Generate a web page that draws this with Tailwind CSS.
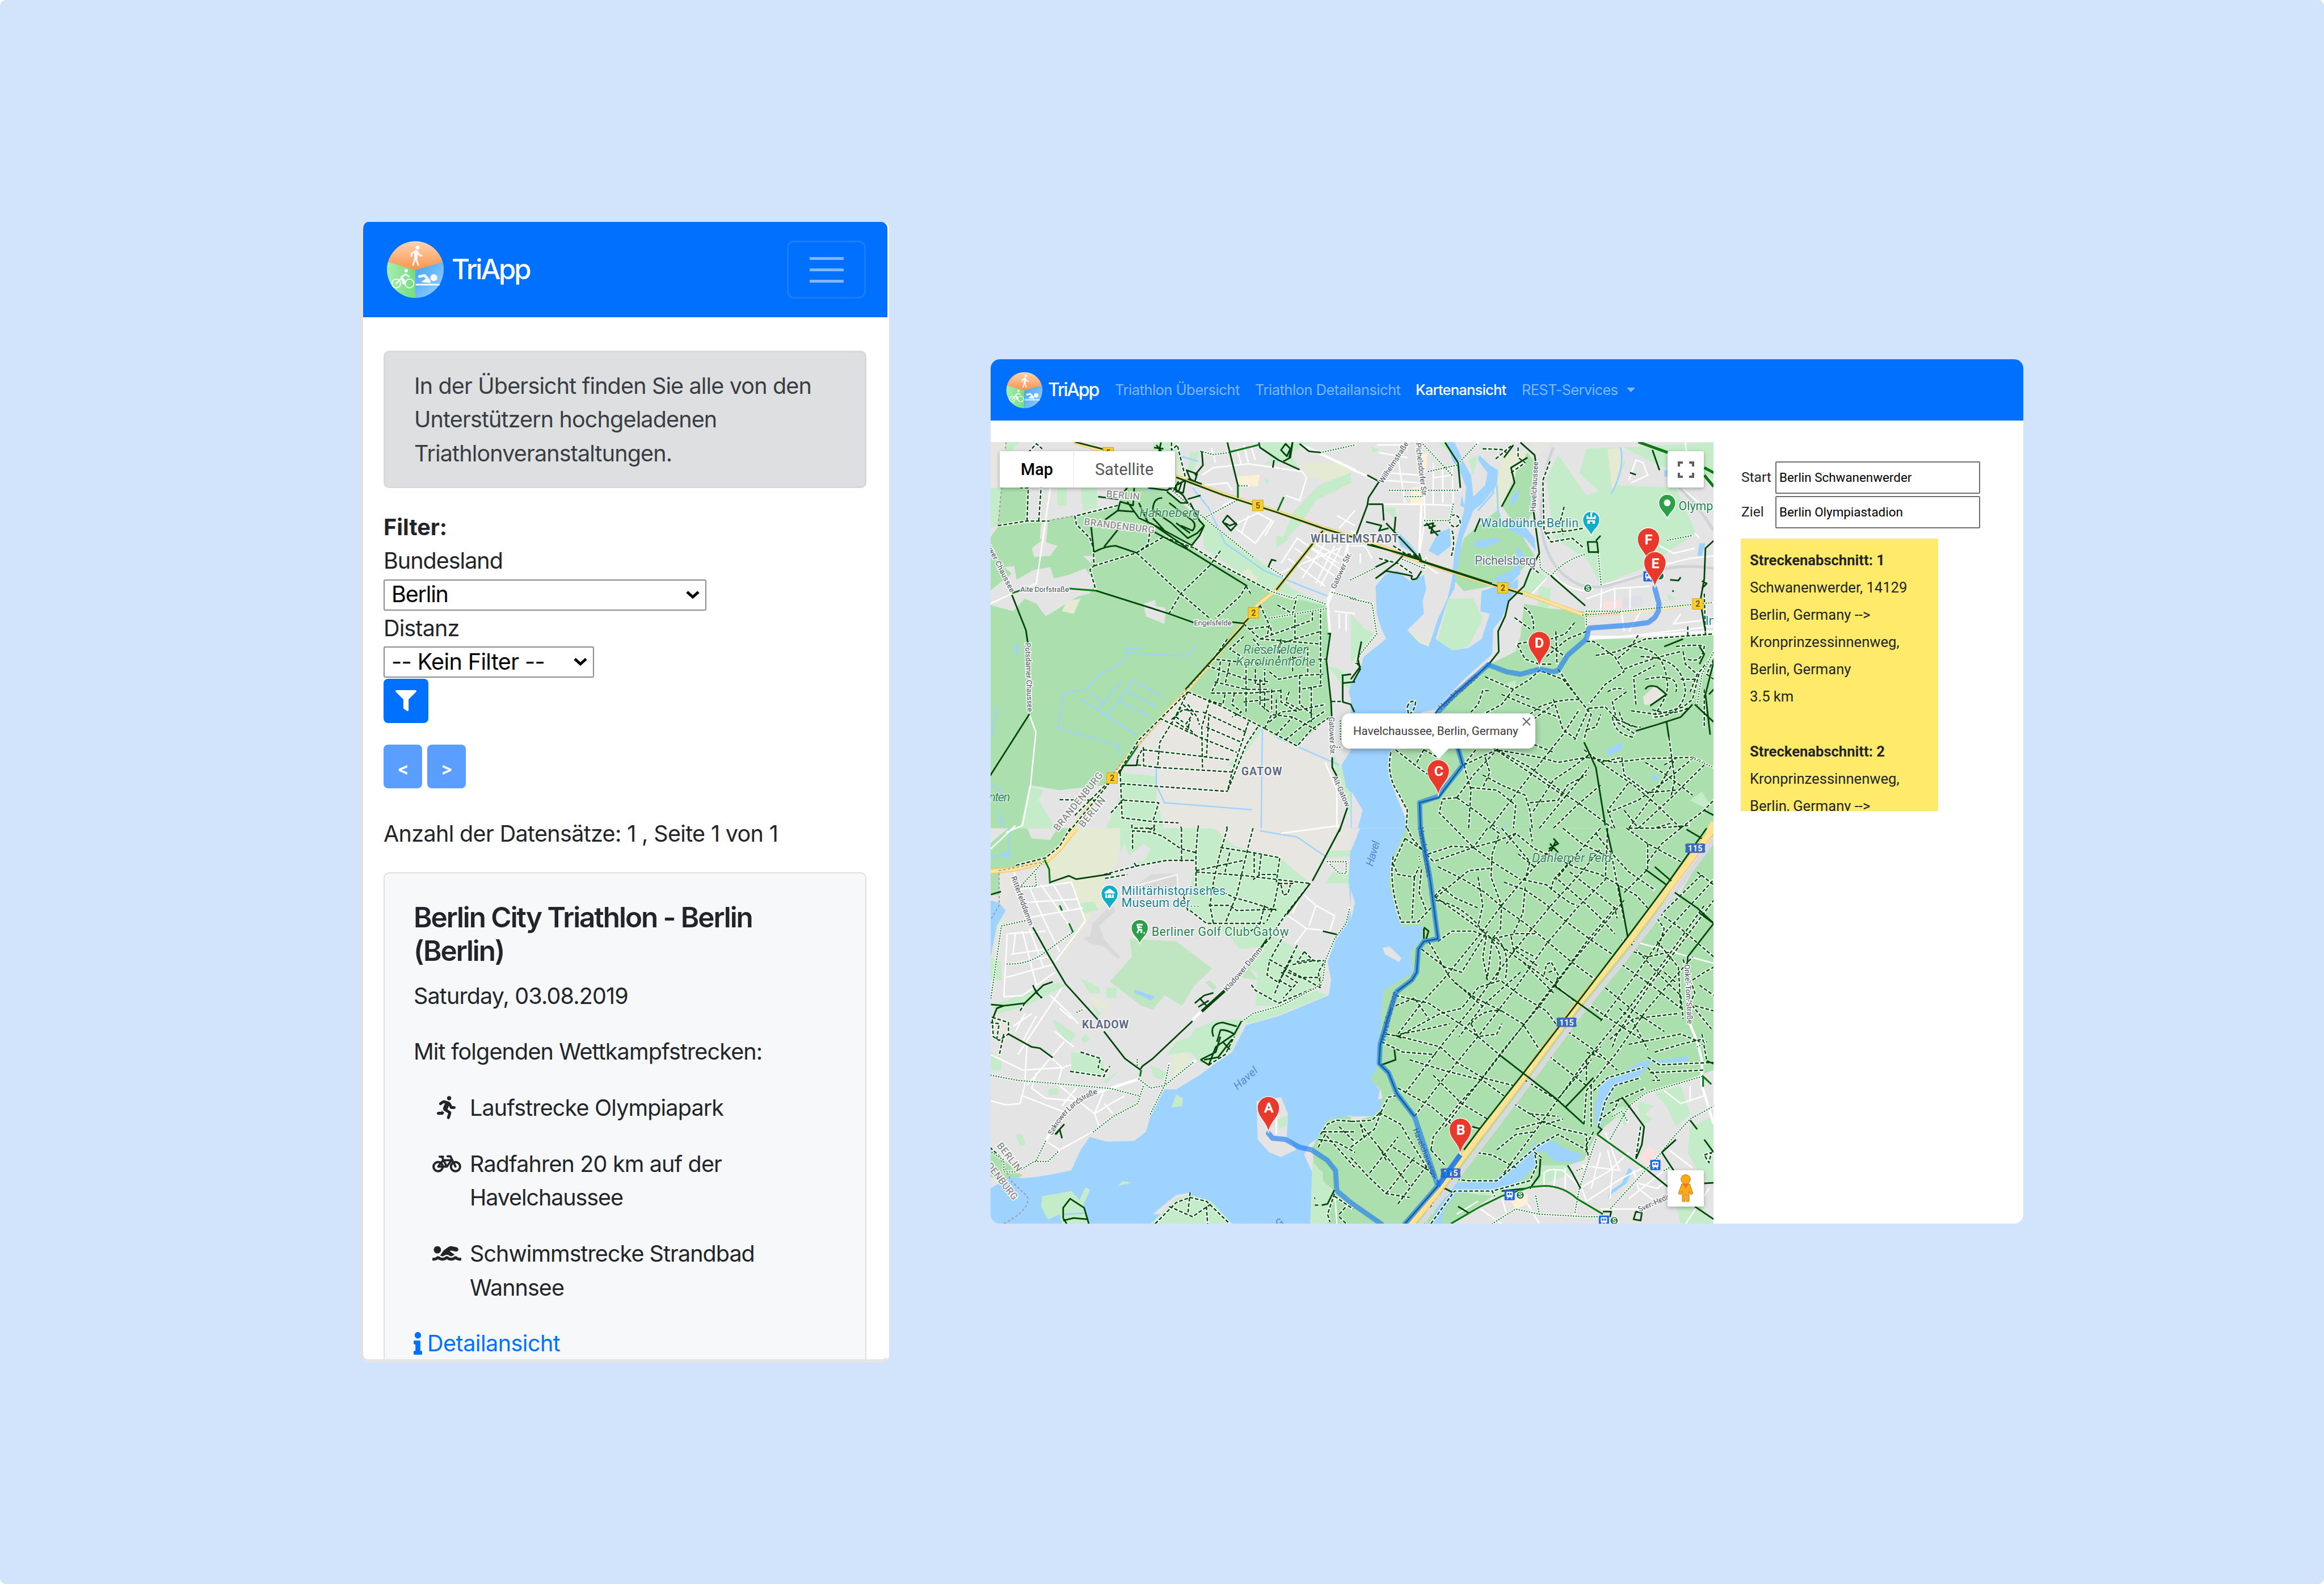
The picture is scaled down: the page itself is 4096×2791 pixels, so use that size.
<!DOCTYPE html>
<html lang="de">
<head>
<meta charset="utf-8">
<title>TriApp</title>
<script src="https://cdn.jsdelivr.net/npm/@tailwindcss/browser@4"></script>
</head>
<body class="bg-white">
<svg width="0" height="0" class="absolute">
  <defs>
    <linearGradient id="run" x1="0" y1="0" x2="0" y2="1"><stop offset="0" stop-color="#fdd6b4"/><stop offset="1" stop-color="#f9924a"/></linearGradient>
    <linearGradient id="bike" x1="0" y1="0" x2="1" y2="0"><stop offset="0" stop-color="#a8eeb0"/><stop offset="1" stop-color="#74dc84"/></linearGradient>
    <linearGradient id="swim" x1="0" y1="0" x2="1" y2="1"><stop offset="0" stop-color="#3ba2fb"/><stop offset="1" stop-color="#a0d4ff"/></linearGradient>
    <clipPath id="disc"><circle cx="50" cy="50" r="49"/></clipPath>
    <symbol id="logo" viewBox="0 0 100 100">
      <g clip-path="url(#disc)">
        <rect width="100" height="52" fill="url(#run)"/>
        <path d="M0 36L50 51V100H0Z" fill="url(#bike)"/>
        <path d="M100 36L50 51V100H100Z" fill="url(#swim)"/>
      </g>
      <g fill="none" stroke="#fff" stroke-opacity=".9" stroke-linecap="round" stroke-linejoin="round">
        <circle cx="54" cy="12" r="3.4" fill="#fff" stroke="none"/>
        <path d="M51 19V31L55 42M50 30L46 42M49 19L44 22 43 27M54 20L57 25 61 26" stroke-width="3"/>
        <path d="M51 19V30" stroke-width="6"/>
        <circle cx="17" cy="74" r="7.5" stroke-width="2"/><circle cx="40" cy="74" r="7.5" stroke-width="2"/>
        <circle cx="34" cy="52" r="3" fill="#fff" stroke="none"/>
        <path d="M17 74L27 64 29 74M33 58L26 63 31 69 31 75M33 58L39 62" stroke-width="2.8"/>
        <circle cx="82" cy="64" r="6" fill="#fff" stroke="none"/>
        <path d="M57 62L66 60 74 69" stroke-width="4.5"/><path d="M62 71L68 67 76 72Z" fill="#fff" stroke-width="2"/>
        <path d="M52 76H91" stroke-width="3"/>
      </g>
    </symbol>
    <g id="pin"><path d="M0 0C-2-26-26-36-26-60A26 26 0 0 1 26-60C26-36 2-26 0 0Z" fill="#e8392d" stroke="#fff" stroke-width="1.5"/></g>
    <g id="poi"><path d="M0 38C-3 24-20 18-20 0A20 20 0 0 1 20 0C20 18 3 24 0 38Z" stroke="#fff" stroke-width="2"/></g>
    <g id="b2"><rect x="-12.5" y="-12.5" width="25" height="25" fill="#fbcd2f" stroke="#d9a514" stroke-width="1.5"/></g>
    <g id="a115"><path d="M-24-9Q-20-12-14-11H14Q20-12 24-9Q21 0 24 9Q20 12 14 11H-14Q-20 12-24 9Q-21 0-24-9Z" fill="#3b68c0"/></g>
    <g id="train"><rect x="-12" y="-12" width="24" height="24" rx="2" fill="#1a66e8"/><rect x="-7.5" y="-8" width="15" height="13" rx="2" fill="#fff"/><path d="M-5-5H-1V0H-5ZM1-5H5V0H1Z" fill="#1a66e8"/><path d="M-6 9L-3 5M6 9L3 5" stroke="#fff" stroke-width="2"/></g>
  </defs>
</svg>

<main class="flex h-[2791px] w-[4096px] items-start gap-[179px] overflow-hidden rounded-[10px] bg-[#d2e4fc] pt-[389px] pl-[635px]">

  <!-- mobile overview -->
  <section class="h-[2012px] w-[932px] shrink-0 overflow-hidden rounded-[14px] border-t-2 border-r-[3px] border-b-[6px] border-l-[5px] border-t-[#dcdfe4] border-r-white border-b-[#e3e4e6] border-l-[#e2e1e2] bg-white font-[Inter,sans-serif] text-[39.5px] leading-[59.3px] tracking-[-0.85px] text-[#212529]">
    <header class="flex h-[168px] items-center justify-between bg-[#0070ff] pr-[38px] pl-[41px]">
      <div class="flex items-center gap-[13px]">
        <svg class="size-[102px]"><use href="#logo"/></svg>
        <span class="text-[49.4px] font-medium tracking-[-3.4px] text-white">TriApp</span>
      </div>
      <div class="flex h-[102px] w-[139px] flex-col items-center justify-center gap-[15px] rounded-[12px] border-[3px] border-white/10">
        <i class="h-[5px] w-[60px] bg-white/50"></i><i class="h-[5px] w-[60px] bg-white/50"></i><i class="h-[5px] w-[60px] bg-white/50"></i>
      </div>
    </header>
    <div class="pt-[59px] pr-[37px] pl-[36px]">
      <div class="h-[242px] rounded-[10px] border-[3px] border-[#d6d8db] bg-[#dedfe1] pt-[30px] pl-[51px] text-[#383d41]">
        <p>In der Übersicht finden Sie alle von den<br>Unterstützern hochgeladenen<br>Triathlonveranstaltungen.</p>
      </div>
      <p class="mt-[40px] font-bold tracking-normal">Filter:</p>
      <p class="tracking-[-1px]">Bundesland</p>
      <div class="flex h-[59px] items-center">
        <div class="flex h-[55px] w-[569px] items-center justify-between rounded-[3px] border-[2.5px] border-[#8b8b8b] pr-[10px] pl-[12px] tracking-[-1.2px] text-black">
          <span>Berlin</span>
          <svg class="h-[16px] w-[24px]" viewBox="0 0 24 16" fill="none" stroke="#000" stroke-width="5"><path d="M2 3L12 12 22 3"/></svg>
        </div>
      </div>
      <p>Distanz</p>
      <div class="flex h-[59px] items-center">
        <div class="flex h-[55px] w-[371px] items-center justify-between rounded-[3px] border-[2.5px] border-[#8b8b8b] pr-[10px] pl-[12px] tracking-[-0.6px] text-black">
          <span>-- Kein Filter --</span>
          <svg class="h-[16px] w-[24px]" viewBox="0 0 24 16" fill="none" stroke="#000" stroke-width="5"><path d="M2 3L12 12 22 3"/></svg>
        </div>
      </div>
      <div class="flex h-[78px] w-[79px] items-start justify-center rounded-[8px] bg-[#0070ff] pt-[20px]">
        <svg class="size-[37px]" viewBox="0 0 512 512" fill="#fff"><path d="M487.976 0H24.028C2.71 0-8.047 25.866 7.058 40.971L192 225.941V432c0 7.831 3.821 15.17 10.237 19.662l80 55.98C298.02 518.69 320 507.493 320 487.98V225.941l184.947-184.97C520.021 25.896 509.338 0 487.976 0z"/></svg>
      </div>
      <div class="mt-[38px] flex gap-[9px] text-[30px] leading-[84px] font-bold text-white">
        <div class="h-[77px] w-[68px] rounded-[8px] bg-[#5a9fff] text-center">&lt;</div>
        <div class="h-[77px] w-[68px] rounded-[8px] bg-[#5a9fff] text-center">&gt;</div>
      </div>
      <p class="mt-[51px] tracking-[-0.65px]">Anzahl der Datensätze: 1 , Seite 1 von 1</p>
      <div class="mt-[38px] h-[900px] rounded-[10px] border-[2.5px] border-[#dfe0e1] bg-[#f7f8fa] pt-[48px] pl-[51px]">
        <h2 class="text-[49.4px] font-semibold tracking-[-2.05px]">Berlin City Triathlon - Berlin<br>(Berlin)</h2>
        <p class="mt-[20px]">Saturday, 03.08.2019</p>
        <p class="mt-[39px]">Mit folgenden Wettkampfstrecken:</p>
        <ul class="mt-[40px] flex flex-col gap-[39.5px]">
          <li class="flex"><span class="flex w-[99px] justify-end pr-[25px]"><svg class="mt-[8px] h-[41px] w-[33px]" viewBox="0 0 416 512" fill="#212529"><path d="M272 96c26.51 0 48-21.49 48-48S298.51 0 272 0s-48 21.49-48 48 21.49 48 48 48zM113.69 317.47l-14.8 34.52H32c-17.67 0-32 14.33-32 32s14.33 32 32 32h77.45c19.25 0 36.58-11.44 44.11-29.09l8.79-20.52-10.67-6.3c-17.32-10.23-30.06-25.37-37.99-42.61zM384 223.99h-44.03l-26.06-53.25c-12.5-25.55-35.45-44.23-61.78-50.94l-71.08-21.14c-28.3-6.8-57.77-.55-80.84 17.14l-39.67 30.41c-14.03 10.75-16.69 30.83-5.94 44.86s30.84 16.69 44.86 5.94l39.69-30.41c7.67-5.89 17.44-8 25.27-6.14l14.7 4.37-37.46 87.39c-12.62 29.48-1.31 64.01 26.3 80.31l84.98 50.17-27.47 87.73c-5.28 16.86 4.11 34.82 20.97 40.09 3.19 1 6.41 1.48 9.58 1.48 13.61 0 26.23-8.77 30.52-22.45l31.64-101.06c5.91-20.77-2.89-43.08-21.64-54.39l-61.24-36.14 31.31-78.28 20.27 41.43c8 16.34 24.92 26.89 43.11 26.89H384c17.67 0 32-14.33 32-32s-14.33-31.99-32-31.99z"/></svg></span><span>Laufstrecke Olympiapark</span></li>
          <li class="flex"><span class="flex w-[99px] justify-end pr-[15px]"><svg class="mt-[8px] h-[41px] w-[51px]" viewBox="0 0 640 512" fill="none" stroke="#212529" stroke-linecap="round" stroke-linejoin="round"><circle cx="128" cy="320" r="102" stroke-width="50"/><circle cx="512" cy="320" r="102" stroke-width="50"/><path d="M128 320L236 180H425L320 320H128M320 320L210 105M160 100H240M512 320L400 92H335" stroke-width="46"/></svg></span><span>Radfahren 20 km auf der<br><span class="tracking-[-1.1px]">Havelchaussee</span></span></li>
          <li class="flex"><span class="flex w-[99px] justify-end pr-[15px]"><svg class="mt-[8px] h-[41px] w-[51px]" viewBox="0 0 640 512" fill="#212529"><path d="M189.61 310.58c3.54 3.26 15.27 9.42 34.39 9.42s30.86-6.16 34.39-9.42c16.02-14.77 34.5-22.58 53.46-22.58h16.3c18.96 0 37.45 7.81 53.46 22.58 3.54 3.26 15.27 9.42 34.39 9.42s30.86-6.16 34.39-9.42c14.86-13.71 31.88-21.12 49.39-22.16l-112.84-80.6 18-12.86c3.64-2.58 8.28-3.52 12.62-2.61l100.35 21.53c25.91 5.53 51.44-10.97 57-36.88 5.55-25.92-10.95-51.44-36.88-57L437.68 98.47c-30.73-6.58-63.02.12-88.56 18.38l-80.02 57.17c-10.38 7.39-19.36 16.44-26.72 26.94L173.75 299c5.47 3.23 10.82 6.93 15.86 11.58zM624 352h-16c-26.04 0-45.8-8.42-56.09-17.9-8.9-8.21-19.66-14.1-31.77-14.1h-16.3c-12.11 0-22.87 5.89-31.77 14.1C461.8 343.58 442.04 352 416 352s-45.8-8.42-56.09-17.9c-8.9-8.21-19.66-14.1-31.77-14.1h-16.3c-12.11 0-22.87 5.89-31.77 14.1C269.8 343.58 250.04 352 224 352s-45.8-8.42-56.09-17.9c-8.9-8.21-19.66-14.1-31.77-14.1h-16.3c-12.11 0-22.87 5.89-31.77 14.1C77.8 343.58 58.04 352 32 352H16c-8.84 0-16 7.16-16 16v32c0 8.84 7.16 16 16 16h16c38.62 0 72.72-12.19 96-31.84 23.28 19.66 57.38 31.84 96 31.84s72.72-12.19 96-31.84c23.28 19.66 57.38 31.84 96 31.84s72.72-12.19 96-31.84c23.28 19.66 57.38 31.84 96 31.84h16c8.84 0 16-7.16 16-16v-32c0-8.84-7.16-16-16-16zm-512-96c44.18 0 80-35.82 80-80s-35.82-80-80-80-80 35.82-80 80 35.82 80 80 80z"/></svg></span><span class="tracking-[-0.95px]">Schwimmstrecke Strandbad<br>Wannsee</span></li>
        </ul>
        <p class="mt-[39px] flex items-start tracking-[-0.5px] text-[#0070ff]"><svg class="mt-[9px] mr-[9px] h-[40px] w-[15px]" viewBox="0 0 192 512" fill="#0070ff"><path d="M20 424.229h20V279.771H20c-11.046 0-20-8.954-20-20V212c0-11.046 8.954-20 20-20h112c11.046 0 20 8.954 20 20v212.229h20c11.046 0 20 8.954 20 20V492c0 11.046-8.954 20-20 20H20c-11.046 0-20-8.954-20-20v-47.771c0-11.046 8.954-20 20-20zM96 0C56.235 0 24 32.235 24 72s32.235 72 72 72 72-32.235 72-72S135.764 0 96 0z"/></svg>Detailansicht</p>
      </div>
    </div>
  </section>

  <!-- desktop map view -->
  <section class="mt-[244px] flex h-[1523px] w-[1820px] shrink-0 flex-col overflow-hidden rounded-[16px] bg-white">
    <header class="flex h-[108px] shrink-0 items-center bg-[#0070ff] pl-[27px] font-[Inter,sans-serif] text-[25.6px] tracking-[-0.55px] text-[#80b7ff]">
      <svg class="size-[65px]"><use href="#logo"/></svg>
      <span class="ml-[9px] w-[88px] text-[32px] font-medium tracking-[-2.2px] whitespace-nowrap text-white">TriApp</span>
      <span class="ml-[30px] w-[219px] whitespace-nowrap">Triathlon Übersicht</span>
      <span class="ml-[28px] w-[257px] whitespace-nowrap">Triathlon Detailansicht</span>
      <span class="ml-[26px] w-[161px] font-medium tracking-[-0.85px] whitespace-nowrap text-white">Kartenansicht</span>
      <span class="ml-[26px] w-[170px] tracking-[-0.8px] whitespace-nowrap">REST-Services</span>
      <svg class="ml-[15px] h-[8px] w-[15px]" viewBox="0 0 15 8" fill="#80b7ff"><path d="M0 0H15L7.500 8Z"/></svg>
    </header>
    <div class="mt-[38px] flex flex-1 font-[Roboto,sans-serif]">
      <div class="relative h-[1377px] w-[1274px] shrink-0 overflow-hidden bg-[#e4e4e4]">
        <svg class="size-full font-[Roboto,sans-serif] [&_path]:[vector-effect:non-scaling-stroke]" viewBox="2332 1041 1702 1840" preserveAspectRatio="none" fill="none">
          <defs>
            <clipPath id="qa"><rect x="0" y="0" width="1551" height="1552"/></clipPath>
            <clipPath id="qb"><rect x="0" y="0" width="1600" height="1552"/></clipPath>
            <clipPath id="qc"><rect x="0" y="0" width="1551" height="1600"/></clipPath>
            <clipPath id="qd"><rect x="0" y="0" width="1600" height="1600"/></clipPath>
            <!-- footpaths and cycleways, drawn twice: casing first, dashes on top -->
            <g id="trails" stroke-linejoin="round">
              <g transform="translate(2330 1030) scale(.54847 .59311)"><path d="M35 350L160 332 255 332M160 332L165 200 130 200M210 332L220 200M165 60L200 25 225 45 M780 20V50L805 30 840 160M550 270L365 312 372 345 430 400 445 440 447 510 430 525 455 605M447 510L630 458 745 395 880 440M630 458L680 425 690 350M630 458L820 620 940 715M945 508L820 620 770 698M990 450L945 508M880 440L1000 510 1210 612M1100 590L1075 630 970 718M1100 590L1120 620M1210 612L1300 640M1160 665L1200 745 1190 790M1235 665L1300 700 1320 625M1090 740L1160 800 1385 725 1385 690M1115 760L1205 750 1210 780M1310 700V800L1210 830M1420 680V980M1310 800L1420 770M1160 800L1420 820M1090 790L1030 840 1080 870M1020 800L960 880 1060 890 1200 900M930 905L1100 960 1200 970M990 890L980 960 950 1015M1030 895L1010 980M1100 900V1090M1140 920V980H1180V920M1200 930L1240 960 1330 945 1430 940M1330 945V1000L1430 985M1365 830V940M1210 1000V1090M1250 1000V1050L1320 1090M1285 1010L1270 1050 1330 1080M1330 1000V1060L1385 1100M1380 990V1130M950 1015L1120 1015 1250 1005M965 970L1100 1000 1200 1000M1010 1020L1000 1060 940 1045M1050 1015L1040 1060 1080 1090 1040 1110M850 1010L1000 1070 1180 1155M1180 1155L1320 1225 1380 1160 1460 1110M1200 1130L1250 1090 1340 1080 1440 1060M1180 1155L1210 1100 1300 1110 1400 1160M1230 1180L1300 1110M1270 1200L1350 1140 1440 1085M850 1010L790 1120 730 1210 720 1310M730 1115L900 1190 1060 1250M945 1040L910 1150 913 1310M930 1150L1080 1210M915 1090L1100 1170M940 1110L930 1270M1110 1130L1040 1330M720 1310L1040 1328 1020 1405M1150 1150L1100 1220 1020 1405M720 1310L632 1300 635 1270 660 1230M660 1240L900 1265 1030 1280M660 1230V1300M565 1375L1020 1405M560 1330L568 1510 700 1525 810 1530M575 1440L725 1450 700 1525M520 1490L575 1435M300 1438L450 1440M340 1565L560 1320 640 1200 850 1010M365 1500L530 1350M830 1060L870 1100 840 1140 880 1180M780 1120L830 1080 900 1090M800 1130L850 1160 860 1120M820 1070L800 1110 830 1130M850 1060L890 1110 900 1140M1468 1048H1520M610 1551V1530M705 1551V1530M822 1551L820 1545M895 1540V1551M1020 1545L1015 1551M620 1551L700 1551M1300 870V930M1130 800L1190 860M1250 800L1240 880M1410 880H1450M1340 870L1280 880M1160 960V1060L1200 1090M1180 1010V1080M1090 1050L1200 1040M1230 1040V1110"/></g>
              <g transform="translate(3180 1030) scale(.55485 .59311)"><path d="M560 45L640 48 660 60M615 85L685 30M710 40V80L740 100M680 140L740 100M845 95L815 170 820 370 850 415 940 400 990 440M905 275L890 330 900 385M830 380L930 370 990 360M425 310Q460 300 465 340 440 370 420 340ZM430 370Q445 420 425 475M120 480L200 500 260 540M180 430L230 460 290 470M240 1070Q250 1040 275 1050 270 1090 245 1100ZM735 675Q780 700 775 760M695 715L760 760M870 770L875 900M950 735L910 780 850 800M800 900L740 880 705 820 760 810M850 830L910 870M850 900L800 900M1000 770L920 800 830 870M570 950L690 1000 760 960 800 925 900 960 970 1040 1020 1100 1000 1160 990 1200M880 920L930 990 970 1040M585 1005L560 1005 540 1060 510 1090M690 1000L640 1060 560 1100M640 1020L740 1060 880 1110M700 1020L760 1040M970 1040Q870 1040 800 1070L650 1180M860 1040L900 1160 960 1200M1010 1075L1080 1070 1130 1120 1210 1150M1010 1075L950 1200M1000 1160L1040 1150 1060 1100M1110 1110Q1120 1180 1200 1190M1140 1090Q1150 1150 1230 1150M1040 865L1130 850 1250 800 1400 790 1540 780M1000 810H1030L1120 870 1160 930 1080 980 1010 1060M1220 785L1180 840 1130 880M1200 830Q1330 840 1340 960 1360 1010 1290 1100M1160 920Q1260 880 1400 850M1210 1060L1200 950 1290 905M1230 870Q1410 870 1420 1010 1400 1110 1280 1110M1190 1085L1300 1100 1410 1070 1450 1040 1480 930 1540 860M1380 830Q1470 820 1500 830 1490 900 1430 880M1250 960Q1400 930 1380 1010M1410 850L1420 900 1470 940 1440 1010M1400 960H1470M1280 1080Q1360 1110 1440 1070M1170 1010L1110 1050 1130 1130 1210 1180M1090 1010Q1120 990 1160 1000M1500 1000V1150M1540 880L1510 940 1540 960M480 1300L510 1400 500 1551M190 1240L300 1320 330 1340M310 1240L370 1270M280 1290L310 1240M450 1430L390 1435 375 1490 440 1551M450 1430L520 1340 620 1240 760 1130 860 1060M450 1430L540 1490 620 1551M480 1300L620 1240 800 1270 880 1290 1000 1270M570 1270L590 1330 560 1390M530 1240L480 1300M620 1240L760 1310 900 1410 1010 1480 1110 1551M700 1170L780 1220 860 1250M600 1230L900 1420M560 1340L640 1380 740 1420 760 1480 770 1551M510 1390L620 1400 700 1460 690 1551M590 1551L680 1440 780 1320 900 1180 970 1080M800 1551L960 1370 1010 1310M760 1450L880 1440 920 1380 1000 1340M860 1551L960 1460 1060 1380M990 1240L1060 1290 1200 1380 1300 1460 1400 1551M1000 1270L1120 1290 1250 1275 1450 1270M1060 1290L1150 1270M1150 1270L1160 1340 1260 1410 1380 1400M1010 1260L940 1310 860 1360 770 1490M1090 1490L1220 1440 1340 1360 1450 1275M1350 1190L1375 1360 1360 1420M1250 1290L1340 1340 1450 1420M1180 1551L1300 1400 1380 1270M1120 1551L1090 1480 1180 1370M1220 1551L1360 1430 1500 1300M1300 1551L1440 1540M1160 1480L1220 1551M1400 1551L1500 1480 1540 1440M1330 1300L1370 1280M1450 1270L1500 1290M170 1250Q150 1340 200 1410L240 1480 235 1551M0 640L80 655M1430 750V790M1500 620L1505 780M750 500L800 540"/></g>
              <g transform="translate(2330 1950) scale(.54847 .60587)"><path d="M345 0L300 70 240 115 110 145M613 80V10L690 15 740 30 820 80 885 95M680 0L705 10 710 -10M823 0V130M893 0L885 95 885 225M490 180L640 145 760 125 885 125M495 195L590 180M620 135L630 150M1020 0L985 110 960 210 945 300 960 370M1130 0L1110 70 1060 260 1010 370M885 165L1090 125M885 170L1100 185 1375 215M990 75L1130 95 1245 115 1230 210M1135 95V180M1165 105L1155 180 M1230 180L1160 180 1130 200M1030 95L1010 170M1240 210L1220 300 1190 360M960 230L1050 270 1130 290 1230 320M940 300L1030 300 1060 320 1230 315M860 320L930 370H1180M1180 300L1160 370 1120 400M940 240L830 260 850 320M1240 215H1310M1250 220L1260 260 1280 255 1290 220M1375 215L1270 335 1200 430 1160 470M1210 500L1260 420M1200 510L1300 560 1420 620M1200 520L1190 570 1240 600 1300 500M1320 455L1260 560 1220 650M1350 480L1320 520 1380 510 1410 520M1350 480L1390 515 1440 515 1410 560 1420 610 1240 680 1140 630 1120 605M1300 530L1390 515M1250 560L1320 600 1260 660M1280 560L1330 580 1420 580M1240 590L1300 620M10 735L80 755 80 800 40 825 15 810ZM60 800L40 885M130 710L150 680M190 620L220 660M390 870L475 895 465 930 500 945 515 925M345 945L490 965 500 940M1420 1190L1450 1150 1490 1135 1568 1140M1410 1240L1440 1190 1500 1250 1568 1320M1410 1210L1490 1220 1568 1260M1430 1180L1568 1180M1500 1160L1568 1220M1480 1420L1450 1500 1460 1530M1480 1430L1560 1480M1500 1500L1530 1470M1395 1435V1440M1395 1465H1410M1500 1510L1530 1537M710 1537L800 1455 860 1435 930 1450 1030 1537M860 1415L850 1500M770 1470L870 1510 950 1460M930 1470L935 1537M0 1240L60 1290M940 920L1010 880 1050 810M0 755L40 760 30 820"/></g>
              <g transform="translate(3180 1950) scale(.55485 .60587)"><path d="M230 40L330 100L430 70 520 75 620 50 700 20 780 80 950 150 1060 180 1210 260 1260 310M440 0L520 75 600 130 720 200M370 150L480 200 570 250 640 305 740 370 820 430 930 515 1040 590M355 265L470 340 560 400 600 430 700 500 840 590 960 680M360 270L500 165 600 155M580 0L520 75 350 130M650 210L740 240 820 290 910 360 1020 435 1110 490M730 200L830 220 870 250 930 290 960 300M880 200L980 280 1050 340 1120 410M930 170L1040 250 1120 310 1130 350M760 0L770 50M700 20L660 60M600 0L630 20 600 100 595 190 640 300 635 390 600 430 580 580M330 440L420 580 530 670 570 700M300 470L400 540 470 560 580 400M440 600L530 660 640 710 730 760 800 860M640 595L720 650 830 710 870 760M190 650L330 680 480 770 540 810 630 880M150 800L210 810 380 850 450 910 560 970 690 1000M130 830L220 870 360 880M250 900L390 940 560 980 650 1040M200 1010L340 1080 440 1160 550 1165M350 960L470 1070 580 1130M0 1280L70 1350 150 1420 250 1435M40 1150L120 1240 250 1390M0 1140L90 1135 130 1100 160 1045 190 1040M120 1105L210 1150 330 1330M40 1150L60 1210M180 1240L330 1330 400 1405M0 1240L100 1170 130 1100M200 800L300 680 400 580 560 400 640 300 760 170 870 60M200 810L380 720 470 700 540 620 640 590M210 800Q330 780 420 760M190 690L270 660 330 740M230 1030L380 850 520 690 640 540 760 400 850 300 980 170 1060 80M270 1120L370 1000 540 810 700 620 830 450 960 310 1080 200 1090 0M340 1250L350 1200 460 1070 560 970 720 780 870 600 1010 430 1130 300M400 1160L640 870 810 680 940 520 1060 390 1160 280M340 1250L400 1310M80 1340L200 1200M150 1420L270 1280M200 1460L340 1290M370 440L430 400 520 400 600 430 700 410 790 410M680 420L690 470 800 540M575 420L560 500 580 590M600 440Q660 500 615 590M620 430Q680 480 655 590M690 480L700 460 780 500M510 760Q560 700 640 710M510 760L540 810 620 800 640 760M820 570L830 530 850 520 880 570 870 610M840 560L870 550M540 190L560 300 540 380M360 280Q480 300 560 400M355 265L390 230 440 270 540 310M740 230L730 330 690 410M180 110Q160 220 215 365L285 365 340 310M230 40L180 140 200 180 270 190 290 150M270 190L260 350M300 160L290 250 320 320M240 0L260 40 350 130M640 0L760 130 740 200M710 100L780 150M850 240L860 200 940 120M900 0L980 60 1110 120 1160 360M1040 20L1090 80 1180 170 1290 240M1170 0L1260 60 1400 130M1260 60L1260 160 1160 250M1060 0L1040 20 960 100 870 200M1180 0L1290 0 1360 -20M1400 0L1320 60 1260 130M530 1260L700 1060 820 910M400 1430L530 1260 600 1270 700 1320M650 1340L820 1130 1000 900 1180 700 1360 480 1500 300M760 1110L880 1120M690 1070L830 1150 900 1130M740 980L900 1070M840 885L1000 1000M920 790L1060 880 1130 940M1000 680L1130 760 1250 830M1080 620L1200 710 1330 790M1150 530L1290 620 1400 700M1190 450L1300 560 1400 650 1410 740M1310 330L1400 390 1540 500M1470 170L1540 220M1000 690L1150 530 1300 350 1490 180M1060 750L1200 580 1340 400 1540 200M1110 850L1130 800 1260 620 1400 450 1540 280M1180 840L1400 800 1480 830M1290 870L1400 840 1490 820M1260 890L1310 920 1540 910M1260 930L1310 980 1280 980M1270 950L1500 940M1030 1020L1090 970 1240 930M1000 980L1000 900 1060 850M1020 1000L1020 1160M990 1150L1000 1020 1130 870 1260 700 1450 500M1050 1160L1080 1060 1120 1000 1230 970M1100 1070L1250 1010M1030 1180L1000 1230 1010 1290M700 1170L820 1140 900 1170 1000 1190M620 1250L700 1190 780 1180M400 1360L500 1370 620 1370 760 1260 800 1230 880 1190 1000 1250M810 1280L780 1260 790 1310 760 1370 600 1410M340 1537L440 1410 600 1410 610 1430M310 1537L360 1430M1410 510L1460 640 1440 680 1530 780M1450 590L1500 560 1540 540M1480 610L1540 650M1460 690L1540 710M1300 350L1330 390 1300 480M1200 480L1260 500 1360 480M1300 440L1390 540 1400 700M1330 560L1380 600M1100 820L1200 740 1300 730 1390 720M1140 700L1190 740 1260 860M1000 1260L1000 1190M1060 890L1000 870M1490 800L1510 900M1140 1050L1120 1090 1060 1130M1230 1160L1210 1280M860 640L730 520M720 560L560 690 460 810M880 1050L1020 900M380 1430L340 1500M1500 1270L1530 1260 1520 1300ZM120 1240L150 1290"/></g>
            </g>
            <g id="dots" stroke-linecap="round">
              <g transform="translate(2330 1030) scale(.54847 .59311)"><path d="M905 55L960 68 1030 60M1420 60L1568 30M1060 250L920 320 1130 475M770 200L920 320M1070 192H1110M1200 515L1265 555M1210 612L1310 640 1325 625 1445 662M1200 718L1445 680M1470 615L1568 640M1505 1125V1200M1480 1230H1510"/></g>
              <g transform="translate(3180 1030) scale(.55485 .59311)"><path d="M300 20L360 80 430 150M330 135L450 110 540 20M165 210H460M230 235H300M435 265L420 330 310 330M1050 460L1062 585M990 465Q900 490 850 550M800 465L805 520 850 550M1345 408L1445 390M1000 690L1160 690 1320 675 1540 655M1000 690V750M985 705L1150 695M0 640L90 660 110 780 40 860 20 900M0 565L100 520M210 480L310 520 320 480M1470 1060L1490 940 1540 850M1450 1275L1540 1310"/></g>
              <g transform="translate(2330 1950) scale(.54847 .60587)"><path d="M5 660L50 380 150 360M75 528Q170 530 240 480L355 405M130 228L230 130M195 180L200 225 130 228M375 715L400 705M5 960L120 980 380 1000 520 1012 640 1040M445 1180L530 1120 635 1070 660 1000M640 975L690 1010 750 1000 880 905M690 1110L750 1000 770 915M633 900V930M200 1290L240 1215M10 1260L60 1290 60 1335 120 1335 190 1295 250 1295 295 1255M1085 750L1130 720 1250 690 1400 620 1430 590 1440 515M1440 515L1480 430 1530 370 1545 310M1450 130H1530V175H1500L1455 135"/></g>
              <g transform="translate(3180 1950) scale(.55485 .60587)"><path d="M1150 435H1200L1210 470M1490 965L1360 1000 1250 1030 1180 1080 1100 1210M1540 1080L1440 1130 1370 1200 1300 1280 1100 1480M1040 1210L970 1400 950 1500M800 1500L785 1430M600 1537L700 1480 800 1500 1000 1510 1120 1510M1110 1120L1150 1100 1175 1140M1330 1330L1350 1320M1510 830L1470 850M290 110L295 130M960 1330L990 1320"/></g>
            </g>
          </defs>

          <!-- land cover -->
          <g transform="translate(2330 1030) scale(.54847 .59311)" clip-path="url(#qa)">
            <path fill="#c5ecc8" d="M0 200H50L30 350 0 360ZM70 18H130L90 55 40 60ZM170 60L260 55 260 200H170ZM390 200H460L460 280 400 290ZM290 200H330L330 270H290ZM700 18H800L830 160 780 200H700ZM900 55L870 140 850 130 860 60ZM910 300L1300 600 1440 660 1450 690 1190 610 920 440ZM1210 90L1170 110 1250 95 1330 130 1290 60 1380 20 1160 20ZM1300 300L1400 200 1551 120 1551 180 1400 250 1330 350 1250 420ZM1180 160L1200 170 1190 190ZM1230 390L1290 400 1230 440ZM560 1330L720 1345 745 1551 500 1551 560 1420ZM170 1385L230 1400 210 1440 280 1551 130 1551ZM1090 1250L1150 1150 1170 1160 1050 1310ZM1180 1175L1230 1175 1230 1210H1180ZM1265 1365L1300 1370 1300 1405H1265ZM1470 1250L1500 1300 1551 1350 1551 1500 1500 1400ZM1455 910L1510 980 1551 1000 1551 960 1500 920Z"/>
            <path fill="#abdfae" d="M0 400L35 355 260 328 370 310 550 270 580 200 720 200 800 240 920 340 870 440 1130 570 1215 612 1160 660 1090 740 850 1000 650 1190 560 1300 490 1380 300 1400 170 1380 130 1551 0 1551ZM50 200H165V335L35 350ZM1190 610L1310 640 1450 670 1462 790 1445 880 1468 1100 1320 1225 1180 1160 850 1010 1090 740ZM1368 1390L1400 1385 1455 1400 1458 1455 1365 1450Z"/>
            <path fill="#e4e4e4" d="M0 610L95 540 60 515 105 510 115 565 190 525 260 515 275 560 340 545 410 520 450 575 430 620 380 630 240 710 200 660 150 640 100 690 0 665ZM180 440L220 410 290 430 260 470 190 475ZM400 470H440L435 500ZM660 660L710 645 715 670 755 675 750 740 670 710Z"/>
            <path fill="#e8e6e1" d="M850 1010L1000 1075 1165 1160 1290 1220 1480 1300 1500 1551 750 1551 715 1440 720 1310 640 1290 660 1220ZM0 20H70L50 200H0ZM220 340L250 335 240 430 215 400Z"/>
            <path fill="#c5ecc8" d="M1090 1250L1150 1150 1170 1160 1050 1310 1020 1300Z"/>
            <path fill="#e5ead2" d="M1340 100L1430 95 1540 110 1551 140 1450 175 1350 150ZM330 650L390 640 360 700 310 690ZM1110 520L1150 560 1130 580 1080 540ZM800 60L830 150 800 150Z"/>
            <path fill="#fdf1d5" d="M1065 155L1160 148 1150 195 1065 185Z"/>
            <path fill="#9fd3ff" d="M1551 980L1541 1010 1551 1040ZM1551 1240L1510 1300 1530 1390 1551 1410ZM108 830L118 815 125 855 108 860ZM40 1470L65 1551 45 1530ZM680 205L700 210 690 222Z"/>
            <path stroke="#9fd3ff" stroke-width="2.500" d="M820 75L895 95M870 200L940 280 1010 420 1180 530 1340 590 1450 630M590 820L580 880 540 910 480 935 410 1000 315 1018 295 1155 550 1222 558 1260M595 855L845 868 885 825M595 838L655 840M425 1010L490 1055 565 968M385 1035L630 1182M460 1085L490 1055M500 1110L615 965 740 1030M555 1045L685 1108M580 1005L715 1070M0 1210L30 1070M715 1310V1380L750 1450 1125 1478M1170 1160L1165 1551M1230 1190L1500 1300M0 1380Q60 1390 55 1440"/>
          </g>
          <g transform="translate(3180 1030) scale(.55485 .59311)" clip-path="url(#qb)">
            <path fill="#c5ecc8" d="M1000 45L1120 40 1165 100 1100 230 1060 220 970 140ZM880 70L1000 230 1130 190 1380 200 1465 380 1240 520 1060 585 1000 480 860 400 830 160ZM360 830L400 700 410 640 520 640 560 720 500 830 430 845ZM735 560L800 520 830 560 780 610 735 640ZM1160 40L1540 20 1540 160 1330 120 1200 60ZM140 280H190V330ZM155 580H200V630H155ZM170 640L230 620 230 680ZM85 35L120 50 95 60ZM370 20H400L430 70ZM520 150L500 90 540 70ZM0 700L60 760 100 780 30 860 0 900ZM1340 620L1380 640 1350 650ZM1310 430L1360 440 1320 480Z"/>
            <path fill="#abdfae" d="M590 900L700 850 1000 800 1150 800 1430 790 1540 770V1551H240L240 1480 165 1340 175 1240 350 1230 370 1090ZM735 660L850 680 990 690 1000 800 880 830 700 850 720 790ZM480 400L620 290 640 330 720 380 780 470 720 530 600 590 480 610 430 560ZM640 270L700 150 700 100 750 60 790 110 770 300 720 380ZM235 1060L280 1045 270 1095 240 1090Z"/>
            <path fill="#e5ead2" d="M650 60L750 50 730 100 690 150 660 230 620 290 600 260ZM1090 45L1150 40 1160 90 1110 230ZM235 760L330 820 350 740 340 830 290 820Z"/>
            <path fill="#e8e6e1" d="M770 20H850L790 80ZM1240 1030L1290 985 1330 1020 1270 1065 1245 1060Z"/>
            <path fill="#fdf1d5" d="M220 20H250L240 60ZM285 70L325 60 320 140 280 130ZM260 200L310 190V270H250ZM290 300L320 330 300 320Z"/>
            <path fill="#fbe0e0" d="M1075 650L1150 645V675L1075 685Z"/>
            <path fill="#dde1e6" d="M1155 635L1240 625V670L1155 675Z"/>
            <path fill="#c5ecc8" d="M1440 1440L1490 1405 1520 1450 1500 1470ZM665 975L700 965V990H665ZM800 590L850 600 840 680 790 670Z"/>
            <path fill="#9fd3ff" d="M0 980L35 940 55 870 150 800 130 760 110 700 105 590 150 540 200 530 250 570 310 545 320 600 305 650 310 700 240 765 290 815 330 830 370 720 410 640 430 560 440 450 480 290 490 200 470 150 430 90 405 18 440 18 475 90 510 150 520 235 570 190 580 140 540 90 545 70 590 110 625 130 620 190 560 260 520 290 475 400 450 530 440 600 410 650 380 740 360 800 430 845 500 835 555 800 590 700 550 690 555 610 620 590 650 600 710 560 710 590 670 650 640 720 605 760 600 860 480 960 360 1080 300 1090 290 1200 170 1240 160 1340 200 1440 250 1551 30 1551 50 1480 0 1400ZM600 560L680 530 740 470 700 430 720 540 660 600ZM370 380L420 360 425 430 370 470 330 450ZM530 410L620 400 640 410 560 440 520 430ZM640 340L720 330 780 400 785 450 740 400 660 360ZM1085 1240L1150 1210V1240L1090 1265ZM1275 1345L1300 1340 1305 1360 1280 1360ZM630 1551L660 1540 665 1551ZM195 370L250 420 290 470 210 430ZM1480 420L1505 420 1490 470 1470 470ZM680 240L715 205 710 240 680 280ZM1330 130H1345V155H1330ZM470 230L485 280 465 270Z"/>
            <path stroke="#9fd3ff" stroke-width="3" d="M600 120L605 220 540 290M620 190L625 290 640 340M1145 40Q1165 120 1105 225M0 985V1551"/>
          </g>
          <g transform="translate(2330 1950) scale(.54847 .60587)" clip-path="url(#qc)">
            <path fill="#e5ead2" d="M380 0H560L550 130 490 190 510 290 440 320 410 380 300 520 400 360 350 210 270 200 250 140ZM440 650L515 690 500 710 440 680ZM790 880L830 865 860 900 790 970ZM30 380L60 350 50 400Z"/>
            <path fill="#e8e6e1" d="M970 0H1551V100L1450 110 1375 215 1240 110 1050 70ZM0 740L80 740 80 830 0 830ZM40 180L100 170 100 220 50 320Z"/>
            <path fill="#c5ecc8" d="M605 0L960 0 1050 70 1240 110 1375 215 1180 460 1070 470 1040 430 850 320 880 130 760 125 640 140 610 80ZM560 0H600L560 100ZM390 290L450 285 465 320 410 330 390 315ZM385 580L470 620 475 640 430 640ZM440 690L480 720 460 730ZM500 620H545V660H500ZM270 740L370 800 340 840 280 770ZM390 820L410 800 430 820 410 835ZM350 870L480 890 500 960 350 945ZM490 980L560 940 500 990ZM690 920L760 950 740 980 700 965ZM760 880L800 830 860 810 880 780 960 750 1090 740 1040 860 960 920 900 910 860 870ZM1085 745L1130 720 1250 690 1400 630 1450 650 1240 725 1110 760ZM1200 410L1420 520 1440 590 1250 690 1140 690 1150 560 1100 540ZM250 1015L290 1010 295 1035 255 1040ZM110 1190L140 1190 155 1230 130 1235ZM5 690L160 640 290 600 330 610 160 690 40 720ZM0 500L50 520V590H0ZM1470 170L1551 180V215L1440 215ZM1450 90L1551 85V110L1450 115ZM560 0H690V80L600 120ZM5 870L50 900 50 940H5ZM160 0H340L250 120 180 40Z"/>
            <path fill="#bfe6c0" d="M600 430L800 440 955 545 880 610 825 690 750 650 700 705 650 690 515 595 610 500ZM925 600L945 590 975 620 960 630ZM1060 560L1110 540 1150 590 1080 580Z"/>
            <path fill="#abdfae" d="M0 0H340L300 70 240 120 110 150 0 165ZM0 170H40V260H0ZM0 1240L60 1290 140 1350 90 1375 0 1355Z"/>
            <path fill="#e4e4e4" d="M160 0H290L260 45 180 40ZM0 60L80 0H5ZM580 120L660 60 690 80 660 130Z"/>
            <path fill="#d9d9d9" d="M690 180L810 175 815 260 600 240ZM440 370L520 300 540 320 470 380 490 430 560 500 550 510 490 460 440 450 400 430 430 420Z"/>
            <path fill="#9fd3ff" d="M1551 60L1540 200 1551 320 1490 420 1450 520 1465 590 1455 650 1240 730 1100 765 1040 870 960 920 900 960 800 1015 750 1015 700 1090 670 1180 620 1215 500 1218 430 1200 390 1250 350 1330 270 1345 200 1355 140 1360 90 1355 0 1400V1537H1400L1385 1340 1350 1270 1370 1230 1430 1190 1450 1150 1551 1115ZM0 280L40 290 68 320 30 380 0 520ZM55 95L80 90V115H60ZM620 628L665 640 710 655 690 670 650 650 620 640Z"/>
            <path fill="#e4e4e4" d="M1145 1060L1250 1045 1280 1110 1275 1200 1315 1250 1250 1278 1200 1260 1150 1210ZM1375 1270L1395 1320 1385 1330ZM700 1500L800 1425 870 1415 750 1500Z"/>
            <path fill="#c5ecc8" d="M1238 1130L1278 1115V1155L1235 1170ZM1385 1300L1450 1280 1551 1400V1537H1375ZM550 1390L570 1372 610 1378ZM225 1430L290 1420 350 1410 385 1445 410 1395 430 1405 400 1470 430 1537H310L300 1500 250 1520 220 1470ZM690 1537L800 1440 860 1425 950 1450 1040 1537ZM800 1035L830 1050 825 1080 780 1085Z"/>
            <path fill="#abdfae" d="M1385 1240L1450 1130 1551 1120V1440L1480 1410 1430 1370 1430 1340 1390 1300ZM1480 1410L1551 1450V1537H1450Z"/>
            <path stroke="#9fd3ff" stroke-width="2.500" d="M1160 10L1320 35 1450 115M320 1500L430 1495M80 0L85 110M0 120L70 95"/>
            <path stroke="#f4f4f4" stroke-width="3" d="M560 240L805 180 808 230 560 260"/>
          </g>
          <g transform="translate(3180 1950) scale(.55485 .60587)" clip-path="url(#qd)">
            <path fill="#abdfae" d="M230 0H1540V1537H0V1140L90 1120 130 1080 120 1010 85 980 90 940 110 840 140 630 260 560 255 480 300 400 215 380 155 220 180 100Z"/>
            <path fill="#9fd3ff" d="M0 0H235L180 110 160 220 215 380 305 380 300 430 255 480 265 560 140 630 110 930 85 975 125 1020 130 1090 90 1120H0Z"/>
            <path fill="#e4e4e4" d="M0 0H40L0 90ZM0 240L18 290 0 360ZM135 465L165 460 215 505 205 520 145 490ZM125 1010L135 1050 115 1055ZM250 520L265 560 255 540ZM1040 1190L1130 1120 1250 1030 1400 985 1540 940V1537H430L650 1400 800 1370 920 1310 990 1290ZM1540 30L1400 250 1300 330 1460 100Z"/>
            <path fill="#c5ecc8" d="M1220 1060L1285 1080 1250 1110 1280 1130 1230 1160ZM1290 1030L1400 1000 1440 1110 1380 1160 1340 1080ZM1440 1160L1540 1120V1400L1470 1330 1430 1260ZM1100 1100L1160 1080 1170 1160ZM1380 1470L1480 1460 1540 1537H1400ZM500 1420L640 1380 800 1370 810 1310 920 1310 940 1340 800 1390 620 1430Z"/>
            <path fill="#fbe0e0" d="M1225 1280L1265 1235 1310 1270 1260 1320Z"/><path fill="#fdf1d5" d="M680 1450L750 1420 750 1460 700 1480Z"/>
            <path fill="#9fd3ff" d="M1240 905L1130 960 1060 990 1037 1080 1040 1160 1065 1162 1080 1080 1120 1010 1230 960 1270 912 1425 908 1437 885 1330 900ZM340 1537L380 1430 450 1380 600 1370 720 1290 780 1225 850 1213 920 1250 985 1268 960 1300 870 1295 820 1255 785 1265 785 1310 720 1370 640 1400 450 1420 400 1480 385 1537ZM1180 1320L1195 1330 1170 1380 1110 1420 1090 1440 1100 1410 1150 1380ZM700 150L705 160 700 170ZM1460 840L1520 830 1490 850Z"/>
          </g>

          <!-- streets -->
          <g stroke="#fff" stroke-width="2.500">
            <g transform="translate(2330 1030) scale(.54847 .59311)"><path d="M0 660L95 620 200 580 260 200M170 1100L198 1170 175 1380 140 1540 70 1568M910 150L960 120 1110 105 1340 135 1360 160 1330 250 1270 230M920 190L1020 180 1040 210M1000 270L1060 240M970 100L950 40M1080 110L1060 40M1110 100L1090 30M1140 90L1120 30M1040 350L1150 300 1210 330 1140 420ZM1080 380L1110 310M1220 330L1180 390M1250 500L1320 400 1500 520M1240 540L1500 440M1280 480L1440 590M1310 440L1480 550M1350 420L1500 500M1390 420L1520 480M1440 420L1340 560M1480 430L1400 580M1510 430L1420 590M1550 380L1530 480 1450 640 1460 780M1480 690L1568 700M1500 700V760M1530 700V770M1490 310L1568 350M1500 360L1568 290M1440 1290L1490 1400 1490 1551"/><path stroke-width="4.500" d="M1340 30L1568 130M1550 380L1500 560 1450 660 1460 780"/></g>
            <g transform="translate(3180 1030) scale(.55485 .59311)"><path d="M120 60L240 80M150 140L300 150M130 170L290 180M110 30L220 30M200 80L230 260M350 160L430 150M350 100L350 270M390 100V260M430 110L435 270 300 265 130 265M310 150L315 330 290 470M0 370L120 420M0 430H60L90 480M40 460V500M320 510L370 540M1000 640L1120 600 1270 590M1120 600V680M1185 600V690M1150 700L1160 770M1230 690L1180 770M1010 790H1150L1540 750M1400 700L1370 740 1540 720M1480 260L1400 200 1370 160M1460 380L1480 400M1310 510L1440 480 1540 470M1310 430L1370 460 1460 440M1180 170L1210 90 1240 100 1260 150 1190 180M860 540Q900 600 1000 610L1065 590 1060 690M800 460L760 530M830 560L770 620M1430 120L1420 20"/><path stroke-width="4" d="M0 125L120 175M300 260L290 470M1060 590L1240 545M1000 800L1540 770"/><path stroke="#cfd2d8" stroke-width="5" d="M860 40Q800 160 810 360 830 520 960 580 1020 610 1120 580L1300 530Q1400 500 1540 520M1370 180Q1460 250 1540 370"/></g>
            <g transform="translate(2330 1950) scale(.54847 .60587)"><path d="M5 80L110 -10M105 160L110 240 190 390M110 240L350 210 410 360 280 520M170 230L240 370 300 480M220 220L290 310 355 400M270 215L340 320M125 290L380 275M150 350L400 310M80 410L240 400M75 410L60 655M110 405L100 490M140 400L200 610M170 390L230 540M90 490L240 470M70 530L250 500M70 580L270 530M60 655L140 650 280 560M310 620L120 880M300 700L350 740M260 650L330 710 380 760M180 720L100 770M200 730L140 830M150 720L110 790M320 830L160 1000M280 790L360 850M160 830L150 1000 130 1070M210 850L310 930 350 920M5 880L140 940 320 930M310 930L290 1000M200 950L180 1010 240 1050 380 1060M380 1000L310 1080M300 1000L380 1060 450 1110 520 1070 580 1040M490 1020L450 1110 470 1160M490 1070L530 1110M140 1040L340 1110M5 1060L70 1075 130 1070M240 1215L300 1250 440 1180M1350 260L1400 300 1480 340 1460 400 1360 390 1310 450M1280 340L1360 390M1330 270L1300 330M1400 300L1370 380M1230 1110V1190M1480 1400L1490 1537M1250 20L1500 -10"/><path stroke-width="5" d="M240 1215L270 1170 360 1060 520 1010 640 975M870 745L910 710"/></g>
            <g transform="translate(3180 1950) scale(.55485 .60587)"><path d="M1200 440L1540 525M1330 1020L1400 1070 1500 1040M1440 1060V1000M1080 1180L1140 1330 980 1310M970 1400L1100 1330 1180 1260M1000 1450L1150 1360 1240 1320M820 1400V1340Q840 1320 900 1330L980 1400 1000 1450M870 1330L860 1400M910 1320V1400M1060 1260L1020 1400M1060 1480L1250 1480M1200 1330L1220 1400 1290 1450M1180 1440L1330 1330M1090 1250L1110 1330 1100 1440M1450 1320L1350 1250M1520 1400L1420 1540M1220 1380L1300 1400 1340 1370M640 1430L660 1500M550 1480L640 1537M750 1460L800 1537M450 1500L540 1450"/><path stroke-width="4.500" d="M1430 500L1430 740 1470 830 1490 900 1490 1000 1540 1150"/></g>
          </g>
          <!-- main roads -->
          <g stroke="#f6c770" stroke-width="7">
            <g transform="translate(2330 1030) scale(.54847 .59311)"><path d="M360 18L510 60 800 155 1000 225 1235 295 1440 362 1568 395M1435 365L1230 605 1150 665 1090 740 850 1000 650 1200 560 1310 340 1568"/></g>
            <g transform="translate(3180 1030) scale(.55485 .59311)"><path d="M-10 395L120 430 290 490 600 585 740 620 990 705 1150 695"/></g>
            <g transform="translate(2330 1950) scale(.54847 .60587)"><path stroke-width="9" d="M370 0L300 80 240 130 100 160 5 168"/></g>
          </g>
          <g stroke="#fde49a" stroke-width="4.500">
            <g transform="translate(2330 1030) scale(.54847 .59311)"><path d="M360 18L510 60 800 155 1000 225 1235 295 1440 362 1568 395M1435 365L1230 605 1150 665 1090 740 850 1000 650 1200 560 1310 340 1568"/></g>
            <g transform="translate(3180 1030) scale(.55485 .59311)"><path d="M-10 395L120 430 290 490 600 585 740 620 990 705 1150 695 1320 680 1540 655"/></g>
            <g transform="translate(2330 1950) scale(.54847 .60587)"><path stroke-width="6" d="M370 0L300 80 240 130 100 160 5 168"/></g>
          </g>
          <g transform="translate(2330 1030) scale(.54847 .59311)"><path stroke="#9a9a9a" stroke-width="2" stroke-dasharray="4 4" d="M70 18L35 350M250 330L370 310M1090 745L560 1300 490 1380"/></g>
          <g transform="translate(2330 1950) scale(.54847 .60587)"><path stroke="#9a9a9a" stroke-width="2" stroke-dasharray="4 4" d="M240 130L40 165 40 300 5 355M50 1290L90 1370 160 1430Q180 1480 60 1537"/></g>

          <g class="stroke-white/90" stroke-width="5"><use href="#trails"/></g>
          <g stroke="#004a0c" stroke-width="2.400" stroke-dasharray="6.500 3.200"><use href="#trails"/></g>
          <g class="stroke-white/90" stroke-width="4.500"><use href="#dots"/></g>
          <g stroke="#0b7d1c" stroke-width="2.400" stroke-dasharray=".1 4.500"><use href="#dots"/></g>

          <!-- autobahn -->
          <g transform="translate(3180 1950) scale(.55485 .60587)" stroke-linejoin="round">
            <path stroke="#d8d9dd" stroke-width="9" d="M1560 20L1200 465 970 725 760 985 490 1310 390 1430 290 1545"/>
            <path stroke="#f6c770" stroke-width="13" d="M1540 0L1180 440 950 700 740 960 470 1285 370 1410 250 1545"/>
            <path stroke="#fde293" stroke-width="10" d="M1540 0L1180 440 950 700 740 960 470 1285 370 1410 250 1545"/>
          </g>
          <path stroke="#fde293" stroke-width="10" d="M4034 1936L4022 1962"/>

          <!-- surveyed ways, solid -->
          <g stroke="#00450a" stroke-width="2.800" stroke-linejoin="round">
            <g transform="translate(2330 1030) scale(.54847 .59311)"><path d="M365 18L510 52M800 158L1000 228 1235 298 1440 364 1568 398M1430 370L1230 605M1090 745L840 1000M0 1345L170 1098M95 625L155 765 163 815M455 608L770 700 875 735M1040 733L1090 738 1160 670M850 445L1105 590M555 1335L575 1302H630L635 1275M735 20L725 60M705 40L745 45M715 30L740 60M1020 20L1065 190 1065 240M910 55L915 110 880 150M845 130L890 145 880 175 860 165ZM850 165L910 185M1155 20L1160 40 1240 90 1330 128M1220 90L1215 120M1250 50L1270 25 1290 45 1275 75ZM1300 20L1290 80 1260 95M1330 25L1370 55 1420 60M800 190L840 170 830 220 800 215ZM810 175L790 210M825 175L810 215M790 200L830 230 850 260 820 260 760 215M850 245L905 230M680 200L760 210 840 170M465 235L550 245 590 200M620 200L615 270 560 255 550 290 620 295M550 290L490 330M590 255L640 320 700 345 850 440M740 240Q700 240 700 290L780 340 850 400 890 380 920 350 900 330 860 260M770 260L870 330Q890 350 870 370L820 350M800 340L860 380M700 320L750 370M710 350L870 430M705 375L860 450M680 340L640 260M865 430L900 390 920 350M435 355L447 455M555 360L490 435M447 455Q500 430 540 430L630 458 M1000 335L1020 310 1060 345 1035 370ZM1010 340L1030 350 1060 340M1195 515L1210 485 1230 490M1450 780L1462 778 1445 885 1465 1050 1468 1110M1470 1270V1310L1490 1345M1535 1470L1500 1565M1510 945L1551 940M1515 945L1515 1050 1551 1060M1300 18L1285 80M1515 975L1568 970"/></g>
            <g transform="translate(3180 1030) scale(.55485 .59311)"><path d="M400 20L455 100 465 200M720 20L780 70 785 100M775 290L800 460 760 530 735 590 670 650 655 710 625 770 628 850 590 895 540 940 440 1020 370 1080M370 1080L350 1110M455 1234L475 1300 372 1430 292 1450 296 1551M850 550L995 668M70 150L120 175 75 240 70 270 20 395M75 265H135L140 330M65 335L130 350 120 370 160 360M190 315L185 370M150 340L290 480M70 425L285 478M85 425L290 485M300 490L600 580M290 460L300 490 270 470M290 490L730 622M105 560L150 530 210 540 260 550Q250 570 280 560L300 530M105 560L190 500 220 470M105 515L160 490M310 350L350 340 340 380 380 370M320 340L370 390M330 360L360 350M550 320L525 375M750 80L680 120 695 180 640 275M690 30L650 80M1005 415H1045L1050 455H1010ZM1040 410L1060 390M1280 50L1310 130M1185 140L1210 148M1355 565L1390 568 1400 555M1365 608L1370 612M1540 410L1505 440 1500 560 1485 640M1490 570L1510 580 1490 600M1485 660L1505 770M45 810L30 880 40 920 10 970M25 895L40 910 0 960M1250 1000Q1260 980 1300 990L1340 1020 1270 1065M1540 890L1505 1020 1525 1180M1460 1060L1540 1130M1210 1165L1300 1140 1400 1110 1450 1060M1340 1130L1350 1190M990 1210L1040 1310 1080 1540M1480 830L1500 860 1480 900M1500 1480L1540 1500M1410 800L1330 830M0 1060L15 1090M1520 1020L1540 1000"/></g>
            <g transform="translate(2330 1950) scale(.54847 .60587)"><path d="M260 210L340 185 370 198 520 178M5 258L48 246M185 385L250 490 325 605 470 750M490 790L580 895 648 940M648 935L655 925 700 895 870 750M1505 0L1385 205M1375 215L1275 335M1190 430L1160 470M1430 400L1490 413M5 685L60 690 150 680 230 610 270 597M185 610L200 640 225 660M15 735L30 700 60 690M80 800L180 850 215 855 270 892M280 1190L320 1150M285 1190L300 1170 310 1205M315 1515L315 1475 345 1440 405 1475 425 1537M315 1525L360 1515 420 1520M315 1515L330 1537M880 680L920 650 960 640M895 695L940 670M900 660L930 690M905 900L940 920 970 850 1050 800 1080 750M905 900L970 870 990 810M975 830L990 785Q1010 780 1050 800M960 810Q940 760 1000 755L1060 770M1040 820L980 890 920 900M1000 830L1030 860M1425 1465L1450 1460 1480 1405"/><path stroke-width="5" d="M910 712L1008 632"/></g>
            <g transform="translate(3180 1950) scale(.55485 .60587)"><path d="M1510 0L1340 220 1175 422 960 680 730 955 550 1165 480 1250M298 0L335 190 370 430 310 440 287 470 280 560 260 590 195 635M170 700L125 840 120 915 160 950 195 1030 270 1120M370 1390L230 1537M1085 0L1110 100M1135 220L1175 422M860 610L1065 745M630 880L870 1050 990 1150M910 1085L1030 970M1250 160L1340 220M1290 150L1360 205M1425 5L1490 40M1375 250L1470 310 1540 370 1430 500 1428 530M1480 330L1540 370M515 1160L550 1168M130 920L190 900 185 860M310 385L330 400 320 430M310 390V430M190 805L215 815M575 580L580 590M920 1310L940 1340 975 1400M760 1400L800 1350 805 1285M640 1410L740 1400M1150 1045L1180 1080 1245 1160 1235 1230 1210 1285M1045 1190L1065 1170 1050 1160M1320 1260L1370 1330M1320 1260L1380 1210M1260 1330L1345 1393M1440 1135L1470 1170M1500 1210L1540 1260M1200 1520L1210 1490 1235 1495 1230 1525ZM1070 1490H1105L1100 1510M1500 1380L1540 1378M1460 1470L1540 1520M840 80L880 60 860 40M845 60L880 95M850 90L870 50M1540 915L1510 905M400 1400L430 1415M455 1470L500 1495"/></g>
          </g>
          <g stroke="#067a10" stroke-width="3">
            <g transform="translate(2330 1030) scale(.54847 .59311)"><path d="M95 618L140 605M340 600L455 608M1065 190V240M1235 292L1262 237M1030 58L1160 28M580 1300L635 1225"/></g>
            <g transform="translate(3180 1030) scale(.55485 .59311)"><path stroke-width="5" d="M1220 18L1345 60M1500 120L1540 140M1500 150L1540 195"/></g>
            <g transform="translate(2330 1950) scale(.54847 .60587)"><path d="M235 122L255 160 258 215M645 965L650 940M300 300L310 320M340 370L358 405"/></g>
            <g transform="translate(3180 1950) scale(.55485 .60587)"><path d="M1045 1190L1260 1330M425 1537L550 1470 640 1430 760 1395 820 1390Q900 1390 960 1440L1070 1500M1495 1005V965L1530 995"/></g>
          </g>

          <!-- route -->
          <g stroke="#1877f2" stroke-opacity=".62" stroke-width="9" stroke-linejoin="round" stroke-linecap="round">
            <path transform="translate(3180 1030) scale(.55485 .59311)" d="M1290 598L1308 660 1305 690 1290 715 1262 735 1180 745 1010 757 1000 800 920 865 880 925 860 930 800 920 720 940 660 930 585 903"/>
            <path d="M3504 1565L3424 1635 3385 1677M3430 1755L3444 1801 3386 1875 3342 1890 3344 1951 3366 2065 3385 2210 3352 2217 3339 2235 3335 2289 3324 2307 3288 2335 3274 2374 3249 2459 3247 2504 3269 2526 3288 2574 3330 2629 3385 2792 3307 2882"/>
            <path d="M2986 2668L2996 2680 3027 2683 3059 2701 3087 2707 3125 2732 3144 2756 3147 2804 3182 2833 3252 2882"/>
          </g>

          <!-- labels -->
          <g class="fill-[#606a70] stroke-white text-[18px] font-medium [paint-order:stroke]" stroke-width="4" text-anchor="middle">
            <text x="2459" y="1394" textLength="115">Alte Dorfstraße</text>
            <text x="2855" y="1473" textLength="89">Engelsfelde</text>
            <text transform="translate(2416 1595) rotate(88)" textLength="163">Potsdamer Chaussee</text>
            <text transform="translate(2350 1340) rotate(63)" textLength="126">ower Chaussee</text>
            <text transform="translate(3163 1346) rotate(-65)" textLength="92">Gatower Str.</text>
            <text transform="translate(3130 1733) rotate(88)" textLength="90">Gatower Str.</text>
            <text transform="translate(3152 1865) rotate(66)" textLength="78">Alt-Gatow</text>
            <text transform="translate(3286 1092) rotate(-57)" textLength="112">Wilhelmstraße</text>
            <text transform="translate(3340 1107) rotate(83)" textLength="128">Pichelsdorfer Str.</text>
            <text transform="translate(3618 1146) rotate(-87)" textLength="118">Havelchaussee</text>
            <text transform="translate(2401 2123) rotate(70)" textLength="122">Ritterfelddamm</text>
            <text transform="translate(2931 2286) rotate(-50)" textLength="130">Kladower Damm</text>
            <text transform="translate(3969 2341) rotate(87)" textLength="140">Onkel-Tom-Straße</text>
            <text transform="translate(3900 2836) rotate(-24)" textLength="88">Sven-Hedin-</text>
          </g>
          <path id="sakrower" d="M2477 2674Q2520 2590 2600 2570"/>
          <text class="fill-[#606a70] stroke-white text-[18px] font-medium [paint-order:stroke]" stroke-width="4"><textPath href="#sakrower" textLength="150">Sakrower Landstraße</textPath></text>
          <g class="fill-[#2a66b0] text-[18px] font-medium" text-anchor="middle">
            <text transform="translate(3437 1633) rotate(-42)" textLength="118">Havelchaussee</text>
            <text transform="translate(3349 2008) rotate(80)" textLength="120">Havelchaussee</text>
            <text transform="translate(3275 2394) rotate(-76)" textLength="118">Havelchaussee</text>
            <text transform="translate(3349 2716) rotate(68)" textLength="122">Havelchaussee</text>
          </g>
          <g class="fill-[#8b8b8b] stroke-white text-[23px] font-medium [paint-order:stroke]" stroke-width="4" text-anchor="middle">
            <text transform="translate(2643 1174) rotate(5)" textLength="79">BERLIN</text>
            <text transform="translate(2634 1246) rotate(7)" textLength="167">BRANDENBURG</text>
            <text transform="translate(2544 1892) rotate(-51)" textLength="170">BRANDENBURG</text>
            <text transform="translate(2577 1917) rotate(-51)" textLength="84">BERLIN</text>
            <text transform="translate(2370 2729) rotate(52)" textLength="80">BERLIN</text>
            <text transform="translate(2353 2786) rotate(52)" textLength="104">DENBURG</text>
          </g>
          <g class="fill-[#5d6980] stroke-white text-[26px] font-bold [paint-order:stroke]" stroke-width="4" text-anchor="middle">
            <text x="3189" y="1278" textLength="207">WILHELMSTADT</text>
            <text x="2970" y="1825" textLength="96">GATOW</text>
            <text x="2602" y="2422" textLength="110">KLADOW</text>
            <text x="3544" y="1329" textLength="144" class="text-[28.500px] font-normal">Pichelsberg</text>
          </g>
          <g class="fill-[#2f8759] stroke-white/80 text-[30px] italic [paint-order:stroke]" stroke-width="2.500" text-anchor="middle">
            <text x="2753" y="1217" textLength="142">Hahneberg</text>
            <text x="3002" y="1539" textLength="150">Rieselfelder</text>
            <text x="3003" y="1568" textLength="187">Karolinenhöhe</text>
            <text x="2353" y="1887" textLength="50">nten</text>
            <text x="3700" y="2030" textLength="187">Dahlemer Feld</text>
          </g>
          <g class="fill-[#5a86cf] text-[26px] italic" text-anchor="middle">
            <text transform="translate(2938 2545) rotate(-42)" textLength="66">Havel</text>
            <text transform="translate(3240 2012) rotate(-74)" textLength="60">Havel</text>
            <text transform="translate(3018 2886) rotate(-42)">G</text>
          </g>
          <g class="stroke-white text-[28.500px] [paint-order:stroke]" stroke-width="3.500">
            <text x="3486" y="1242" textLength="230" fill="#157f8d">Waldbühne Berlin</text>
            <text x="2640" y="2107" textLength="245" fill="#157f8d">Militärhistorisches</text>
            <text x="2640" y="2136" textLength="184" fill="#157f8d">Museum der...</text>
            <text x="4015" y="1471" fill="#157f8d">In</text>
            <text x="2711" y="2203" textLength="323" fill="#1d7f50">Berliner Golf Club Gatow</text>
            <text x="3952" y="1202" fill="#1d7f50">Olympiastadion</text>
          </g>

          <!-- road shields and stations -->
          <use href="#b2" x="2609" y="1066"/><use href="#b2" x="2961" y="1190"/><use href="#b2" x="2951" y="1443"/><use href="#b2" x="2618" y="1832"/><use href="#b2" x="3538" y="1384"/><use href="#b2" x="3997" y="1422"/>
          <g class="fill-[#5a4a10] text-[19px] font-medium" text-anchor="middle"><text x="2609" y="1073">5</text><text x="2961" y="1197">5</text><text x="2951" y="1450">2</text><text x="2618" y="1839">2</text><text x="3538" y="1391">2</text><text x="3997" y="1429">2</text></g>
          <use href="#a115" x="3991" y="1997"/><use href="#a115" x="3688" y="2407"/><use href="#a115" x="3415" y="2762"/>
          <g class="fill-white text-[19px] font-bold" text-anchor="middle"><text x="3991" y="2004" textLength="34">115</text><text x="3688" y="2414" textLength="34">115</text><text x="3415" y="2769" textLength="34">115</text></g>
          <path stroke="#0a6cf0" stroke-opacity=".8" stroke-width="9" d="M3438 2719L3385 2792"/>
          <use href="#train" x="3554" y="2814"/><use href="#train" x="3897" y="2743"/><use href="#train" x="3776" y="2874"/><use href="#train" x="3881" y="1357"/>
          <g stroke="#fff" stroke-width="2" fill="#18733a"><circle cx="3579" cy="2814" r="9.500"/><circle cx="3800" cy="2874" r="9.500"/><circle cx="3738" cy="1385" r="9.500"/><circle cx="3908" cy="1356" r="9.500"/></g>
          <g class="fill-white text-[16px] font-bold" text-anchor="middle"><text x="3579" y="2820">S</text><text x="3800" y="2880">S</text><text x="3738" y="1391">S</text></g>

          <!-- places -->
          <use href="#poi" x="3746" y="1224" fill="#12adc6"/><path fill="#fff" d="M3735 1222V1214H3739V1218H3744V1206H3752L3748 1209V1218H3753V1214H3757V1222ZM3737 1225H3755V1233H3749V1228H3743V1233H3737Z"/>
          <use href="#poi" x="2612" y="2104" fill="#12adc6"/><path fill="#fff" d="M2600 2101L2612 2092 2624 2101V2104H2600ZM2602 2106H2622V2114H2602Z"/><path stroke="#12adc6" stroke-width="1.500" d="M2607 2112V2105H2617V2112"/>
          <use href="#poi" x="2683" y="2185" fill="#2d9f48"/><path stroke="#fff" stroke-width="3" d="M2676 2177H2690M2677 2177L2681 2189 2677 2197M2681 2189L2687 2190V2197M2678 2182L2688 2184M2692 2197H2695"/>
          <use href="#poi" x="3925" y="1184" fill="#2d9f48"/><circle cx="3925" cy="1184" r="8" fill="#fff"/>

          <!-- waypoints -->
          <use href="#pin" x="3881" y="1329"/><use href="#pin" x="3896" y="1385"/><use href="#pin" x="3624" y="1573"/><use href="#pin" x="3386" y="1875"/><use href="#pin" x="2986" y="2668"/><use href="#pin" x="3438" y="2719"/>
          <g class="fill-white text-[33px] font-medium" stroke="#fff" stroke-width=".8" text-anchor="middle"><text x="3881" y="1281">F</text><text x="3897" y="1337">E</text><text x="3624" y="1525">D</text><text x="3387" y="1827">C</text><text x="2987" y="2619">A</text><text x="3439" y="2671">B</text></g>
        </svg>

        <div class="absolute top-[16px] left-[16px] flex h-[64px] w-[309px] rounded-[3px] bg-white text-[28.800px] leading-[64px] shadow-[0_2px_7px_rgba(0,0,0,.3)]">
          <div class="w-[131px] border-r border-[#e6e6e6] pl-[37px] font-medium text-black">Map</div>
          <div class="pl-[37px] text-[#565656]">Satellite</div>
        </div>
        <div class="absolute top-[16px] right-[17px] flex size-[64px] items-center justify-center rounded-[3px] bg-white shadow-[0_2px_7px_rgba(0,0,0,.3)]">
          <svg class="size-[29px]" viewBox="0 0 29 29" fill="none" stroke="#5f5f5f" stroke-width="4"><path d="M2 9V2H9M20 2H27V9M27 20V27H20M9 27H2V20"/></svg>
        </div>
        <div class="absolute right-[17px] bottom-[30px] flex size-[64px] items-center justify-center rounded-[3px] bg-white shadow-[0_2px_7px_rgba(0,0,0,.3)]">
          <svg class="h-[50px] w-[28px]" viewBox="0 0 28 50" fill="#fba919" stroke="#b9791b" stroke-width="1"><path d="M7 17H21L27 34 23 36 20 30V48H15V36H13V48H8V30L5 36 1 34Z"/><path d="M9 18L14 25 19 18Z" fill="#e97a1f" stroke="none"/><circle cx="14" cy="9" r="8.300"/></svg>
        </div>
        <!-- info window -->
        <div class="absolute top-[478px] left-[619px] h-[62px] w-[341px] rounded-[13px] bg-white shadow-[0_3px_12px_rgba(0,0,0,.35)]">
          <p class="pt-[15px] pl-[20px] text-[20.500px] leading-[32px] whitespace-nowrap text-[#3c3c3c]">Havelchaussee, Berlin, Germany</p>
          <svg class="absolute top-[7px] right-[8px] size-[15px]" viewBox="0 0 15 15" stroke="#6b6b6b" stroke-width="2.200"><path d="M1 1L14 14M14 1L1 14"/></svg>
          <svg class="absolute top-[61px] left-[153px] h-[19px] w-[36px]" viewBox="0 0 36 19" fill="#fff"><path d="M0 0H36L18 19Z"/></svg>
        </div>
      </div>

      <aside class="pt-[34px] pl-[48px] text-[22.400px] text-[#212529]">
        <div class="flex h-[57px] items-center pl-[1px]">
          <span class="w-[60px] text-[24.500px]">Start</span>
          <div class="flex h-[57px] w-[361px] items-center rounded-[2px] border-2 border-[#6e6e6e] pl-[5px] text-black">Berlin Schwanenwerder</div>
        </div>
        <div class="mt-[4px] flex h-[57px] items-center pl-[1px]">
          <span class="w-[60px] text-[24.500px]">Ziel</span>
          <div class="flex h-[57px] w-[361px] items-center rounded-[2px] border-2 border-[#6e6e6e] pl-[5px] text-black">Berlin Olympiastadion</div>
        </div>
        <div class="mt-[18px] h-[480px] w-[348px] overflow-hidden bg-[#ffeb69] pt-[14px] pl-[16px] text-[25.600px] leading-[48.100px] whitespace-nowrap">
          <p class="font-bold">Streckenabschnitt: 1</p>
          <p>Schwanenwerder, 14129</p>
          <p>Berlin, Germany --&gt;</p>
          <p>Kronprinzessinnenweg,</p>
          <p>Berlin, Germany</p>
          <p>3.5 km</p>
          <p class="mt-[48px] font-bold">Streckenabschnitt: 2</p>
          <p>Kronprinzessinnenweg,</p>
          <p>Berlin, Germany --&gt;</p>
        </div>
      </aside>
    </div>
  </section>
</main>
</body>
</html>
